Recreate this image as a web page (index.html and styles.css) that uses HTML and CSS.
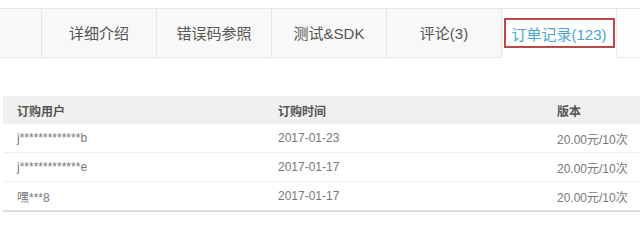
FILE: index.html
```html
<!DOCTYPE html>
<html lang="zh-CN">
<head>
<meta charset="utf-8">
<link rel="stylesheet" href="styles.css">
</head>
<body>
<div class="tabs">
  <div class="tab-spacer"></div>
  <div class="tab">详细介绍</div>
  <div class="tab">错误码参照</div>
  <div class="tab">测试&amp;SDK</div>
  <div class="tab">评论(3)</div>
  <div class="tab active"><span class="active-box">订单记录(123)</span></div>
  <div class="tab-rest"></div>
</div>
<div class="orders">
  <div class="row head">
    <div class="cell">订购用户</div>
    <div class="cell">订购时间</div>
    <div class="cell">版本</div>
  </div>
  <div class="row">
    <div class="cell">j*************b</div>
    <div class="cell">2017-01-23</div>
    <div class="cell">20.00元/10次</div>
  </div>
  <div class="row">
    <div class="cell">j*************e</div>
    <div class="cell">2017-01-17</div>
    <div class="cell">20.00元/10次</div>
  </div>
  <div class="row last">
    <div class="cell">嘿***8</div>
    <div class="cell">2017-01-17</div>
    <div class="cell">20.00元/10次</div>
  </div>
</div>
</body>
</html>
```
FILE: styles.css
```css
html, body {
  margin: 0;
  padding: 0;
  background: #fff;
  font-family: "Liberation Sans", "Noto Sans CJK SC", sans-serif;
}
.tabs {
  margin-top: 8px;
  display: flex;
  height: 49px;
  border-top: 1px solid #e6e6e6;
}
.tab-spacer {
  width: 41px;
  background: #f9f9f9;
  border-bottom: 1px solid #e8e8e8;
}
.tab {
  width: 115px;
  border-left: 1px solid #e6e6e6;
  border-bottom: 1px solid #e8e8e8;
  background: #f8f8f8;
  display: flex;
  align-items: center;
  justify-content: center;
  font-size: 15px;
  color: #555;
  padding-bottom: 2px;
  box-sizing: border-box;
}
.tab.active {
  background: #fff;
  border-bottom-color: #fff;
  align-items: flex-start;
  padding-top: 9px;
}
.active-box {
  display: flex;
  align-items: center;
  justify-content: center;
  width: 111px;
  height: 30px;
  box-sizing: border-box;
  border: 2px solid #b84a4a;
  color: #4ba3d3;
}
.tab-rest {
  flex: 1;
  border-left: 1px solid #e8e8e8;
  border-bottom: 1px solid #eee;
  background: #fdfdfd;
}
.orders {
  margin-top: 38px;
  margin-left: 3px;
}
.row {
  display: grid;
  grid-template-columns: 261px 279px 1fr;
  height: 29px;
  align-items: center;
  border-bottom: 1px solid #eee;
  font-size: 12px;
  color: #777;
  box-sizing: border-box;
  white-space: nowrap;
}
.row.head {
  background: #f0f0f0;
  height: 28px;
  border-bottom: none;
  font-weight: bold;
  color: #555;
}
.row.last {
  border-bottom: 2px solid #ddd;
  height: 30px;
}
.cell {
  padding-left: 14px;
}
```
